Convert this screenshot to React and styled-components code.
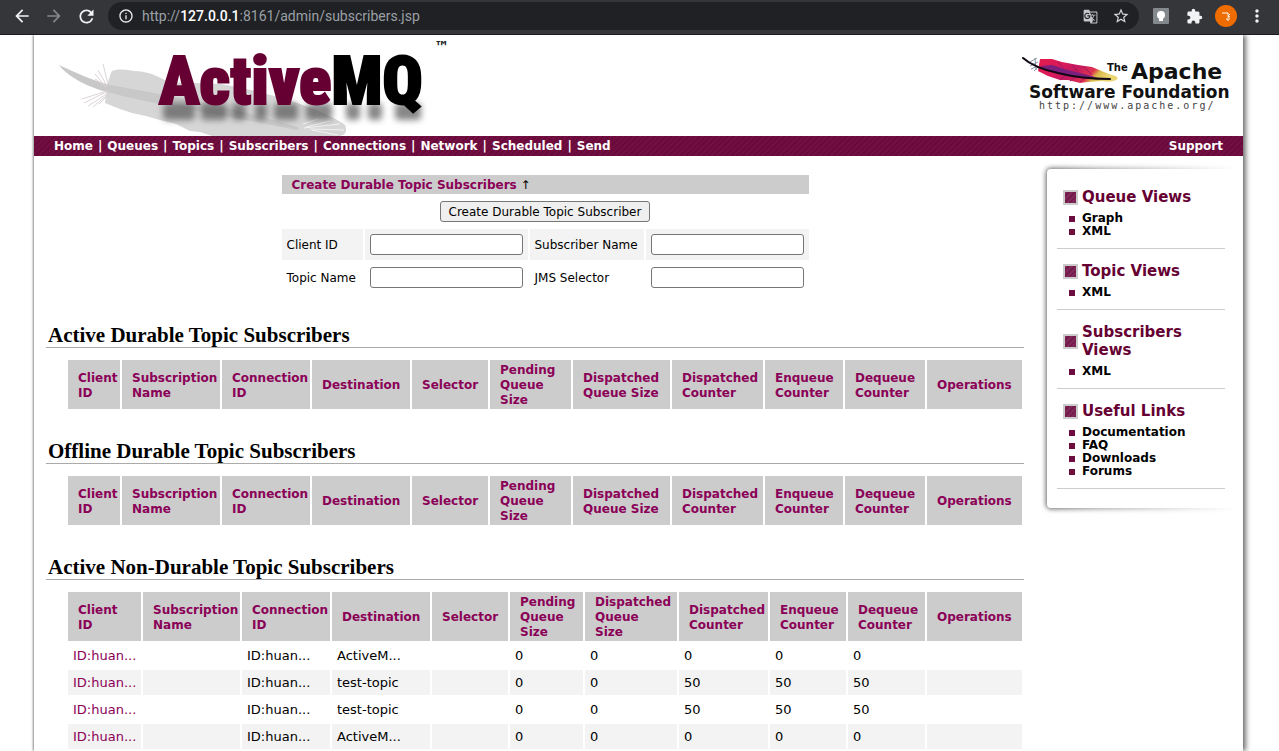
import React from 'react';
import styled, { createGlobalStyle } from 'styled-components';
import { MdArrowBack, MdArrowForward, MdRefresh, MdInfoOutline, MdGTranslate, MdStarBorder, MdMoreVert } from 'react-icons/md';

const SANS = '"DejaVu Sans", Verdana, sans-serif';
const WINE = '#660033';
const LINK = '#8b0057';
const STRIPES = 'repeating-linear-gradient(135deg, #710f42 0 2px, #690a3b 2px 4px)';

const GlobalStyle = createGlobalStyle`
  *, *::before { box-sizing: border-box; }
  body { margin: 0; background: #fff; color: #000; font: 13px/15px ${SANS}; }
  a { color: inherit; text-decoration: none; }
  h1, h2, h3, ul { margin: 0; padding: 0; }
  ul { list-style: none; }
`;

const Shell = styled.div`
  min-height: 100vh;
  display: flex;
  flex-direction: column;
`;

/* ---------- browser bar ---------- */
const BrowserBar = styled.header`
  display: flex;
  align-items: center;
  height: 35px;
  padding: 0 12px 2px 12px;
  background: #35363a;
  border-bottom: 1px solid #1c1c1e;
`;
const IconButton = styled.button`
  display: grid;
  place-items: center;
  width: ${(p) => p.$w || 20}px;
  height: 28px;
  padding: 0;
  border: 0;
  background: none;
  color: ${(p) => p.$color || '#f1f3f4'};
`;
const NavButtons = styled.div`
  display: flex;
  gap: 12px;
`;
const AddressBar = styled.div`
  flex: 1;
  display: flex;
  align-items: center;
  height: 28px;
  margin: 0 10px 0 12px;
  padding: 0 6px 0 10px;
  border-radius: 14px;
  background: #202124;
  color: #9aa0a6;
`;
const Address = styled.span`
  flex: 1;
  padding-left: 8px;
  font: 14px/20px Roboto, sans-serif;
  b { color: #fff; font-weight: 500; }
`;
const Extensions = styled.div`
  display: flex;
  gap: 10px;
`;

/* ---------- page frame ---------- */
const Page = styled.div`
  flex: 1;
  margin: 0 36px 0 34px;
  background: #fff;
  box-shadow: 3px 0 5px rgba(0, 0, 0, 0.55), -1px 0 2px rgba(0, 0, 0, 0.4);
  clip-path: inset(0 -12px 0 -4px);
`;
const Masthead = styled.div`
  display: flex;
  justify-content: space-between;
  height: 101px;
  padding: 0 11px 0 21px;
`;
const NavBar = styled.nav`
  display: flex;
  justify-content: space-between;
  height: 20px;
  padding: 0 20px;
  line-height: 20px;
  font-size: 12px;
  font-weight: 700;
  color: #fff;
  background: ${STRIPES};
`;
const NavLinks = styled.div`
  display: flex;
  gap: 5px;
`;
const Body = styled.div`
  display: flex;
  align-items: flex-start;
`;
const Main = styled.main`
  flex: 1;
  min-width: 0;
  padding: 19px 0 0 12px;
`;

/* ---------- create form ---------- */
const FormWrap = styled.div`
  display: flex;
  justify-content: center;
  padding-left: 20px;
`;
const CreateForm = styled.form`
  font-size: 12px;
`;
const FormTitle = styled.div`
  height: 19px;
  padding: 3px 10px 1px;
  background: #ccc;
  a { color: ${LINK}; font-weight: 700; }
`;
const FormAction = styled.div`
  display: flex;
  justify-content: center;
  padding: 7px 0;
`;
const Submit = styled.button`
  height: 21px;
  padding: 1px 8px 0;
  border: 1px solid #767676;
  border-radius: 3px;
  background: #efefef;
  color: #000;
  font: 12px/15px ${SANS};
`;
const Fields = styled.div`
  display: grid;
  grid-template-columns: 81px 163px 114px 163px;
  grid-auto-rows: 31px;
  gap: 2px;
`;
const FieldLabel = styled.label`
  padding: 9px 0 7px 5px;
  white-space: nowrap;
  background: ${(p) => (p.$shaded ? '#f3f3f3' : 'transparent')};
`;
const FieldCell = styled.div`
  padding: 5px;
  background: ${(p) => (p.$shaded ? '#f3f3f3' : 'transparent')};
`;
const TextInput = styled.input`
  display: block;
  width: 100%;
  height: 21px;
  padding: 1px 2px;
  border: 1px solid #767676;
  border-radius: 3px;
  background: #fff;
  font: 12px/15px ${SANS};
`;

/* ---------- tables ---------- */
const SectionTitle = styled.h2`
  margin-top: 30px;
  padding-left: 2px;
  border-bottom: 1px solid #aaa;
  font: 700 21px/24px "Liberation Serif", Georgia, serif;
`;
const TableWrap = styled.div`
  padding: 10px 0 0 20px;
  margin-bottom: -2px;
`;
const Table = styled.table`
  width: 100%;
  table-layout: fixed;
  border-collapse: separate;
  border-spacing: 2px;
`;
const Col = styled.col`
  width: ${(p) => p.$w}px;
`;
const Th = styled.th`
  height: 49px;
  padding: 3px 0 1px 10px;
  background: #ccc;
  color: ${LINK};
  font-size: 12px;
  text-align: left;
  vertical-align: middle;
  white-space: nowrap;
`;
const Td = styled.td`
  height: 25px;
  padding: 5px;
  white-space: nowrap;
  background: ${(p) => (p.$shaded ? '#f3f3f3' : 'transparent')};
  a { color: ${LINK}; }
`;

/* ---------- sidebar ---------- */
const Sidebar = styled.aside`
  position: relative;
  flex: none;
  width: 204px;
  margin: 6px 0 0 15px;
  padding: 26px 18px 26px 18px;
`;
const PanelEdge = styled.div`
  position: absolute;
  inset: 0 6px 0 0;
  overflow: hidden;
  pointer-events: none;
  mask-image: linear-gradient(to right, #000 0, rgba(0, 0, 0, 0.6) 30%, transparent 100%);
  &::before {
    content: '';
    position: absolute;
    inset: 7px -20px 7px 8px;
    border-radius: 4px;
    box-shadow: 0 0 5px 1px rgba(0, 0, 0, 0.65);
  }
`;
const ViewGroup = styled.section`
  padding-bottom: 10px;
  border-bottom: 1px solid #ccc;
  & + & { padding-top: 13px; }
`;
const ViewTitle = styled.h3`
  display: flex;
  align-items: center;
  gap: 4px;
  padding-left: 6px;
  margin-bottom: 6px;
  color: ${WINE};
  font-size: 15px;
  line-height: 18px;
  &::before {
    content: '';
    flex: none;
    width: 15px;
    height: 15px;
    border: 2px solid #ccc;
    background: repeating-linear-gradient(135deg, #80285a 0 2px, #731c4a 2px 4px);
  }
`;
const ViewItem = styled.li`
  display: flex;
  align-items: center;
  gap: 7px;
  padding-left: 12px;
  font-size: 12px;
  line-height: 13px;
  font-weight: 700;
  &::before {
    content: '';
    width: 6px;
    height: 6px;
    background: #6f0c3f;
  }
`;

const LogoSvg = styled.svg`
  display: block;
  flex: none;
`;

function ActiveMQLogo() {
  const blurs = [[160, 32], [198, 26], [229, 14], [252, 12], [271, 24], [303, 26], [343, 14], [365, 14], [392, 26]];
  return (
    <LogoSvg width="400" height="101" viewBox="55 35 400 101" role="img" aria-label="ActiveMQ">
      <defs>
        <filter id="soft" x="-30%" y="-60%" width="160%" height="220%">
          <feGaussianBlur stdDeviation="3" />
        </filter>
      </defs>
      <path d="M112 71 C120 68 128 70 134 71 C148 71 158 76 168 82 L220 84 C270 92 325 110 345 125 C348 131 345 136 338 136 L212 136 L200 132 L190 131 L176 124 L160 120 L146 116 L132 113 L120 109 L105 103 C106 94 108 78 112 71Z" fill="#d6d6d6" />
      <path d="M59 65 C76 73 92 80 110 85 C160 94 230 106 300 128 L296 130 C230 116 150 104 107 92 C88 87 68 77 59 65Z" fill="#c8c8c8" />
      <path d="M95 74 L106 87 M98 70 L107 86 M103 64 L108 84 M95 79 L104 85 M82 99 L107 91 M84 103 L106 92 M88 106 L108 93 M93 107 L108 94 M99 104 L108 95" stroke="#ddd5d5" strokeWidth="1" fill="none" />
      <path d="M303 124 L318 119 M306 127 L330 121 M304 128 L340 124 M310 129 L344 130 M312 130 L338 135" stroke="#f3f3f3" strokeWidth="1" fill="none" />
      <g filter="url(#soft)" fill="#555" opacity="0.7">
        {blurs.map(([x, w]) => <rect key={x} x={x + 3} y="103" width={w} height="17" rx="4" />)}
      </g>
      <text x="159" y="104" fontFamily='Impact, "Roboto Condensed", Roboto, sans-serif' fontWeight="900" fontSize="67" fill="#660033" stroke="#660033" strokeWidth="2">
        Active<tspan fill="#000" stroke="#000">MQ</tspan>
      </text>
      <text x="434" y="52" fontFamily={SANS} fontWeight="700" fontSize="15" fill="#222">™</text>
    </LogoSvg>
  );
}

function ApacheLogo() {
  return (
    <LogoSvg width="212" height="101" viewBox="1020 35 212 101" role="img" aria-label="The Apache Software Foundation">
      <defs>
        <linearGradient id="plume" x1="0" y1="0" x2="1" y2="0.3">
          <stop offset="0" stopColor="#e31b4c" />
          <stop offset="0.35" stopColor="#d81a5c" />
          <stop offset="0.55" stopColor="#c4185f" />
          <stop offset="0.78" stopColor="#e0344f" />
          <stop offset="0.86" stopColor="#d9b84a" />
          <stop offset="1" stopColor="#ead673" />
        </linearGradient>
      </defs>
      <path d="M1030 62 L1037 58 M1030 66 L1038 62 M1031 69 L1038 66 M1034 71 L1039 66 M1035 58 L1036 70" stroke="#8b93a3" strokeWidth="1" />
      <path d="M1040 59 L1052 59 L1062 62 L1078 65 L1092 67 L1104 72 L1112 75 C1118 76 1119 79 1116 80 C1112 82 1107 82 1102 81 L1088 82 L1080 83 L1068 80 L1060 80 L1048 76 L1038 71Z" fill="url(#plume)" />
      <path d="M1041 66 L1052 65 L1068 70 L1088 75 L1098 78 L1082 77 L1062 75 L1044 69Z" fill="#7a1f7d" />
      <path d="M1060 80 L1066 75 M1070 81 L1077 76 M1080 82 L1086 77 M1058 62 L1065 70 M1072 65 L1079 73 M1084 67 L1092 75" stroke="#a01868" strokeWidth="1" />
      <path d="M1023 58 C1032 66 1044 70 1058 73 C1074 77 1090 79 1110 79" stroke="#100812" strokeWidth="2" fill="none" strokeLinecap="round" />
      <g fontFamily={SANS} fontWeight="700" fill="#111">
        <text x="1107" y="71" fontSize="10">The</text>
        <text x="1131" y="79" fontSize="22">Apache</text>
        <text x="1029" y="98" fontSize="17">Software Foundation</text>
      </g>
      <text x="1039" y="109" fontFamily='"DejaVu Sans Mono", monospace' fontSize="10" letterSpacing="2" fill="#444">http://www.apache.org/</text>
    </LogoSvg>
  );
}

const NAV = ['Home', 'Queues', 'Topics', 'Subscribers', 'Connections', 'Network', 'Scheduled', 'Send'];

const HEADERS = [
  ['Client', 'ID'], ['Subscription', 'Name'], ['Connection', 'ID'], ['Destination'], ['Selector'],
  ['Pending', 'Queue', 'Size'], ['Dispatched', 'Queue Size'], ['Dispatched', 'Counter'],
  ['Enqueue', 'Counter'], ['Dequeue', 'Counter'], ['Operations'],
];
const NON_DURABLE_HEADERS = HEADERS.map((h, i) => (i === 6 ? ['Dispatched', 'Queue', 'Size'] : h));
const DURABLE_COLS = [52, 98, 88, 98, 76, 81, 97, 91, 78, 80, 95];
const NON_DURABLE_COLS = [73, 97, 88, 98, 76, 73, 92, 89, 76, 77, 95];
const ROWS = [
  ['ID:huan...', '', 'ID:huan...', 'ActiveM...', '', '0', '0', '0', '0', '0', ''],
  ['ID:huan...', '', 'ID:huan...', 'test-topic', '', '0', '0', '50', '50', '50', ''],
  ['ID:huan...', '', 'ID:huan...', 'test-topic', '', '0', '0', '50', '50', '50', ''],
  ['ID:huan...', '', 'ID:huan...', 'ActiveM...', '', '0', '0', '0', '0', '0', ''],
];
const VIEWS = [
  ['Queue Views', ['Graph', 'XML']],
  ['Topic Views', ['XML']],
  ['Subscribers Views', ['XML']],
  ['Useful Links', ['Documentation', 'FAQ', 'Downloads', 'Forums']],
];
const FIELDS = [
  ['clientId', 'Client ID', true],
  ['subscriberName', 'Subscriber Name', true],
  ['topicName', 'Topic Name', false],
  ['jmsSelector', 'JMS Selector', false],
];

function Row({ cells, shaded }) {
  return (
    <tr>
      {cells.map((cell, i) => (
        <Td key={i} $shaded={shaded}>{i === 0 ? <a href="#connection">{cell}</a> : cell}</Td>
      ))}
    </tr>
  );
}

function SubscriberTable({ title, headers, cols, rows = [] }) {
  return (
    <section>
      <SectionTitle>{title}</SectionTitle>
      <TableWrap>
        <Table aria-label={title}>
          <colgroup>{cols.map((w, i) => <Col key={i} $w={w} />)}</colgroup>
          <thead>
            <tr>
              {headers.map((lines, i) => (
                <Th key={i} scope="col">
                  {lines.map((line, n) => <React.Fragment key={line}>{n > 0 && <br />}{line}</React.Fragment>)}
                </Th>
              ))}
            </tr>
          </thead>
          <tbody>
            {rows.map((row, r) => <Row key={r} cells={row} shaded={r % 2 === 1} />)}
          </tbody>
        </Table>
      </TableWrap>
    </section>
  );
}

export default function App() {
  return (
    <Shell>
      <GlobalStyle />
      <BrowserBar>
        <NavButtons>
          <IconButton aria-label="Back"><MdArrowBack size={20} /></IconButton>
          <IconButton aria-label="Forward" $color="#85868a"><MdArrowForward size={20} /></IconButton>
          <IconButton aria-label="Reload"><MdRefresh size={21} /></IconButton>
        </NavButtons>
        <AddressBar>
          <MdInfoOutline size={16} color="#e8eaed" />
          <Address>http://<b>127.0.0.1</b>:8161/admin/subscribers.jsp</Address>
          <IconButton aria-label="Translate this page" $w={38} $color="#c4c7cb"><MdGTranslate size={15} /></IconButton>
          <IconButton aria-label="Bookmark this page" $w={24} $color="#d5d7da"><MdStarBorder size={18} /></IconButton>
        </AddressBar>
        <Extensions>
          <IconButton aria-label="Lightbulb extension" $w={24}>
            <svg width="16" height="16" viewBox="0 0 16 16">
              <rect width="16" height="16" rx="1" fill="#84898e" />
              <circle cx="8" cy="7" r="4" fill="#fff" />
              <path d="M6 10h4v3H6z" fill="#fff" />
            </svg>
          </IconButton>
          <IconButton aria-label="Extensions" $w={22}>
            <svg width="17" height="17" viewBox="0 0 24 24" fill="currentColor">
              <path d="M20.5 11H19V7c0-1.1-.9-2-2-2h-4V3.5a2.5 2.5 0 0 0-5 0V5H4c-1.1 0-2 .9-2 2v3.8h1.5c1.5 0 2.7 1.2 2.7 2.7s-1.2 2.7-2.7 2.7H2V20c0 1.1.9 2 2 2h3.8v-1.5c0-1.5 1.2-2.7 2.7-2.7s2.7 1.2 2.7 2.7V22H17c1.1 0 2-.9 2-2v-4h1.5a2.5 2.5 0 0 0 0-5z" />
            </svg>
          </IconButton>
          <IconButton aria-label="Profile" $w={22}>
            <svg width="22" height="22" viewBox="0 0 22 22">
              <circle cx="11" cy="11" r="11" fill="#ef6c00" />
              <path d="M7 8h6c0 3 0 6 2 6M15 9l-2 2 2 1M12 13v2h2" stroke="#fff" strokeWidth="1" fill="none" />
            </svg>
          </IconButton>
          <IconButton aria-label="Menu"><MdMoreVert size={20} /></IconButton>
        </Extensions>
      </BrowserBar>

      <Page>
        <Masthead>
          <ActiveMQLogo />
          <ApacheLogo />
        </Masthead>
        <NavBar>
          <NavLinks>
            {NAV.map((item, i) => (
              <React.Fragment key={item}>
                {i > 0 && <span>|</span>}
                <a href={`#${item.toLowerCase()}`}>{item}</a>
              </React.Fragment>
            ))}
          </NavLinks>
          <a href="#support">Support</a>
        </NavBar>
        <Body>
          <Main>
            <FormWrap>
              <CreateForm onSubmit={(e) => e.preventDefault()}>
                <FormTitle><a href="#create">Create Durable Topic Subscribers</a> ↑</FormTitle>
                <FormAction><Submit type="submit">Create Durable Topic Subscriber</Submit></FormAction>
                <Fields>
                  {FIELDS.map(([id, label, shaded]) => (
                    <React.Fragment key={id}>
                      <FieldLabel htmlFor={id} $shaded={shaded}>{label}</FieldLabel>
                      <FieldCell $shaded={shaded}><TextInput id={id} name={id} type="text" /></FieldCell>
                    </React.Fragment>
                  ))}
                </Fields>
              </CreateForm>
            </FormWrap>
            <SubscriberTable title="Active Durable Topic Subscribers" headers={HEADERS} cols={DURABLE_COLS} />
            <SubscriberTable title="Offline Durable Topic Subscribers" headers={HEADERS} cols={DURABLE_COLS} />
            <SubscriberTable title="Active Non-Durable Topic Subscribers" headers={NON_DURABLE_HEADERS} cols={NON_DURABLE_COLS} rows={ROWS} />
          </Main>
          <Sidebar>
            <PanelEdge />
            {VIEWS.map(([title, links]) => (
              <ViewGroup key={title}>
                <ViewTitle>{title}</ViewTitle>
                <ul>
                  {links.map((link) => <ViewItem key={link}><a href={`#${link.toLowerCase()}`}>{link}</a></ViewItem>)}
                </ul>
              </ViewGroup>
            ))}
          </Sidebar>
        </Body>
      </Page>
    </Shell>
  );
}
